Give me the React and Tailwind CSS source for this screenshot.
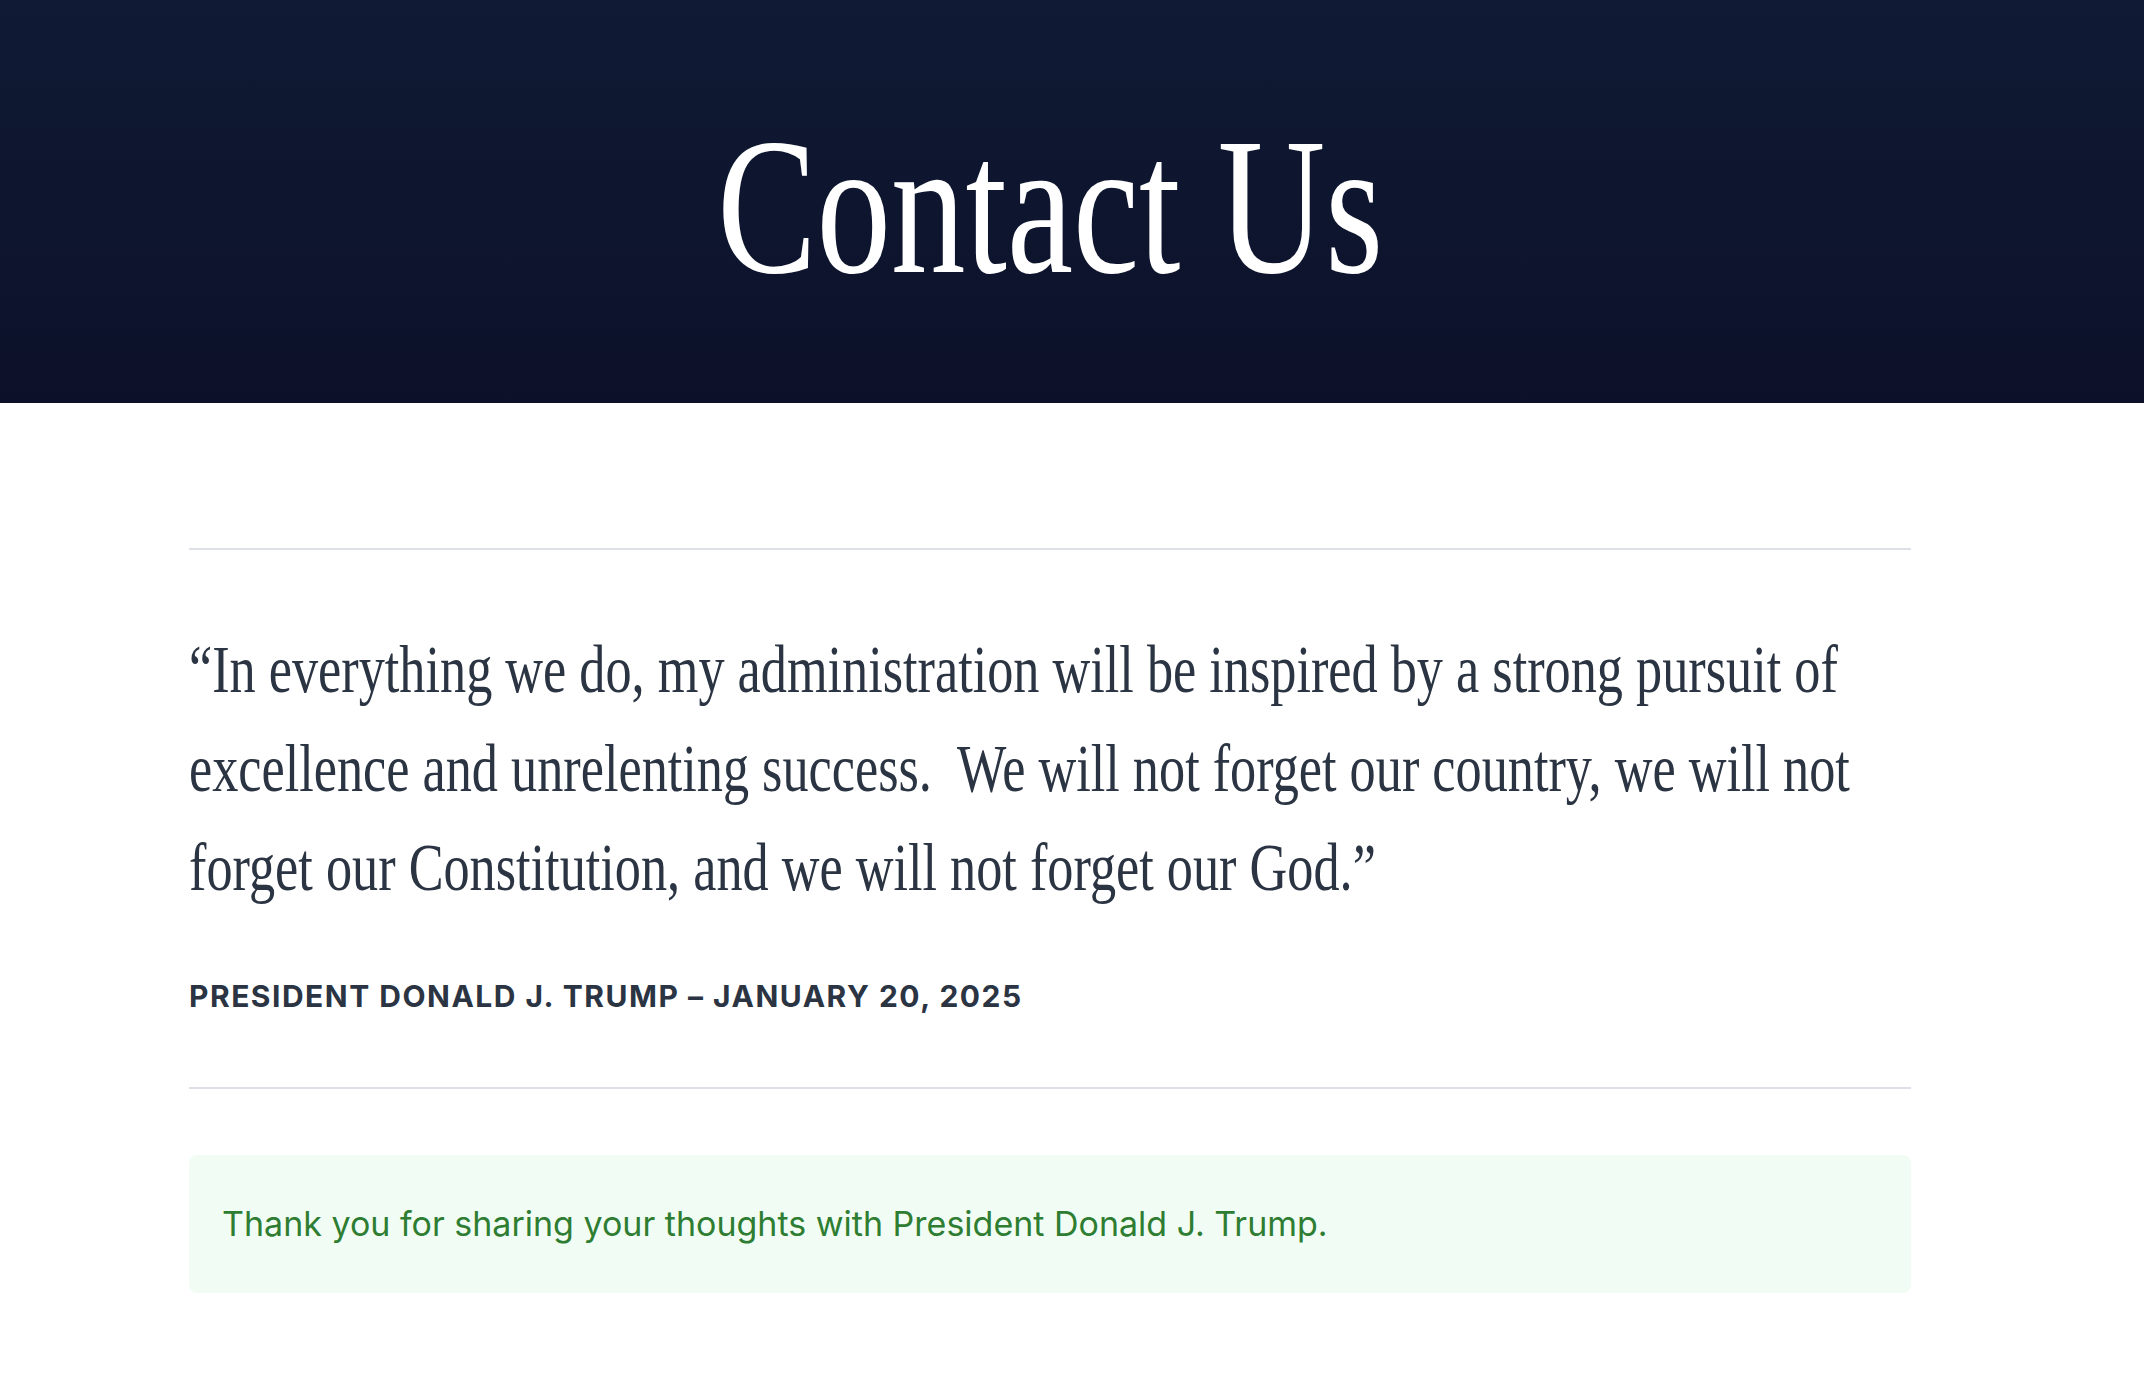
const serif = "font-['Liberation_Serif','Times_New_Roman',serif]";
const sans = "font-['Inter','Liberation_Sans',sans-serif]";

const quoteLines = [
  "“In everything we do, my administration will be inspired by a strong pursuit of",
  "excellence and unrelenting success.\u00a0 We will not forget our country, we will not",
  "forget our Constitution, and we will not forget our God.”",
];

export default function App() {
  return (
    <div className="min-h-screen overflow-x-hidden bg-white">
      {/* HERO */}
      <header className="h-[403px] bg-gradient-to-b from-[#101a34] to-[#0c1129]">
        <div className="flex w-[2100px] justify-center pt-[108px]">
          <h1
            className={`${serif} inline-block scale-x-[0.76] whitespace-nowrap text-[196px] font-normal leading-none text-white`}
          >
            Contact Us
          </h1>
        </div>
      </header>

      {/* CONTENT */}
      <main className="w-[2100px]">
        <div className="mx-auto w-[1722px] pt-[145px] pb-[90px]">
          <hr className="border-t-2 border-[#dde1e7]" />

          <blockquote className="mt-[70px]">
            <p
              className={`${serif} origin-left scale-x-[0.78] text-[67px] leading-[99px] text-[#2b3442]`}
            >
              {quoteLines.map((line) => (
                <span key={line} className="block whitespace-nowrap">
                  {line}
                </span>
              ))}
            </p>
            <p
              className={`${sans} mt-[61px] text-[30px] font-bold uppercase leading-[36px] tracking-[0.05em] text-[#2b3442]`}
            >
              President Donald J. Trump – January 20, 2025
            </p>
          </blockquote>

          <hr className="mt-[73px] border-t-2 border-[#dde1e7]" />

          <div className="mt-[66px] rounded-lg bg-[#f1fdf4] px-[33px] py-[45px]">
            <p className={`${sans} text-[34px] leading-[48px] text-[#2e7d32]`}>
              Thank you for sharing your thoughts with President Donald J. Trump.
            </p>
          </div>
        </div>
      </main>
    </div>
  );
}
